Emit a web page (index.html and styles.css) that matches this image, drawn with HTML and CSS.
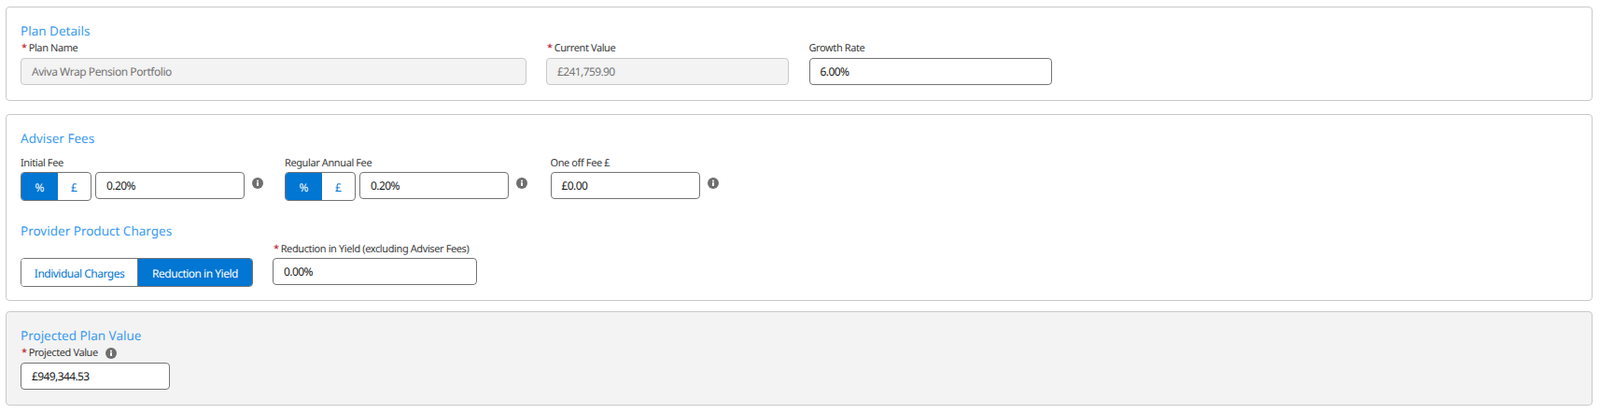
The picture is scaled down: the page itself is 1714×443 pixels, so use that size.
FILE: index.html
```html
<!DOCTYPE html>
<html lang="en">
<head>
<meta charset="utf-8">
<title>Plan</title>
<link rel="stylesheet" href="styles.css">
</head>
<body>
<section class="card card-plan">
  <h2 class="title">Plan Details</h2>
  <div class="row">
    <div class="field w-name">
      <label class="label tall"><span class="req">*</span>Plan Name</label>
      <div class="input disabled">Aviva Wrap Pension Portfolio</div>
    </div>
    <div class="field w-value">
      <label class="label tall"><span class="req">*</span>Current Value</label>
      <div class="input disabled num">£241,759.90</div>
    </div>
    <div class="field w-value">
      <label class="label tall">Growth Rate</label>
      <div class="input num">6.00%</div>
    </div>
  </div>
</section>

<section class="card card-fees">
  <h2 class="title">Adviser Fees</h2>
  <div class="fees">
    <div class="fee fee-1">
      <label class="label">Initial Fee</label>
      <div class="fee-line">
        <div class="toggle"><span class="seg on pct">%</span><span class="seg gbp">£</span></div>
        <div class="input num w-fee">0.20%</div>
        <svg class="info" viewBox="0 0 12 12"><circle cx="6" cy="6" r="6"/><rect x="5" y="5.2" width="2" height="3.8" fill="#fff"/><rect x="5" y="2.8" width="2" height="1.6" fill="#fff"/></svg>
      </div>
    </div>
    <div class="fee fee-2">
      <label class="label">Regular Annual Fee</label>
      <div class="fee-line">
        <div class="toggle"><span class="seg on pct">%</span><span class="seg gbp">£</span></div>
        <div class="input num w-fee">0.20%</div>
        <svg class="info" viewBox="0 0 12 12"><circle cx="6" cy="6" r="6"/><rect x="5" y="5.2" width="2" height="3.8" fill="#fff"/><rect x="5" y="2.8" width="2" height="1.6" fill="#fff"/></svg>
      </div>
    </div>
    <div class="fee">
      <label class="label">One off Fee £</label>
      <div class="fee-line">
        <div class="input num w-fee">£0.00</div>
        <svg class="info" viewBox="0 0 12 12"><circle cx="6" cy="6" r="6"/><rect x="5" y="5.2" width="2" height="3.8" fill="#fff"/><rect x="5" y="2.8" width="2" height="1.6" fill="#fff"/></svg>
      </div>
    </div>
  </div>
  <h2 class="title title-charges">Provider Product Charges</h2>
  <div class="charges">
    <div class="segmented"><span class="opt opt-a">Individual Charges</span><span class="opt opt-b">Reduction in Yield</span></div>
    <div class="field w-yield">
      <label class="label"><span class="req">*</span>Reduction in Yield (excluding Adviser Fees)</label>
      <div class="input num">0.00%</div>
    </div>
  </div>
</section>

<section class="card card-proj">
  <h2 class="title">Projected Plan Value</h2>
  <div class="field w-fee">
    <label class="label tall"><span class="req">*</span>Projected Value<svg class="info info-inline" viewBox="0 0 12 12"><circle cx="6" cy="6" r="6"/><rect x="5" y="5.2" width="2" height="3.8" fill="#fff"/><rect x="5" y="2.8" width="2" height="1.6" fill="#fff"/></svg></label>
    <div class="input num">£949,344.53</div>
  </div>
</section>
</body>
</html>
```
FILE: styles.css
```css
* { box-sizing: border-box; }
html, body { margin: 0; padding: 0; }
body {
  width: 1714px;
  height: 443px;
  padding: 7px 8px 0 6px;
  background: #fff;
  font-family: "Noto Sans", "Open Sans", sans-serif;
  font-size: 12px;
  color: #181818;
  overflow: hidden;
  text-rendering: geometricPrecision;
}
.card {
  border: 1px solid #c9c9c9;
  border-radius: 4px;
  padding: 16px 15px 0;
  background: #fff;
}
.card-plan { height: 101px; margin-bottom: 14px; }
.card-fees { height: 200px; margin-bottom: 11px; }
.card-proj { height: 101px; background: #f3f3f3; }
.title {
  margin: 0;
  font-size: 13.5px;
  line-height: 18px;
  font-weight: 400;
  color: #3a9bf0;
}
.row { display: flex; gap: 21.5px; }
.field { display: flex; flex-direction: column; }
.w-name { width: 541.5px; }
.w-value { width: 260px; }
.w-fee { width: 160px; }
.w-yield { width: 219px; margin-top: -18px; }
.label {
  display: flex;
  align-items: center;
  height: 18px;
  font-size: 11px;
  line-height: 18px;
  color: #3a3a3a;
  letter-spacing: -0.4px;
  white-space: nowrap;
}
.label.tall { height: 20px; }
.req { color: #ba0517; margin: 0 2px 0 1px; }
.input {
  height: 29px;
  line-height: 27px;
  padding: 0 11px;
  border: 1px solid #747474;
  border-radius: 4px;
  background: #fff;
  color: #181818;
  font-size: 12px;
  letter-spacing: -0.45px;
}
.input.num { letter-spacing: -0.6px; }
.input.disabled {
  border-color: #c9c9c9;
  background: #f3f3f3;
  color: #747474;
}
.fees { display: flex; margin-top: 9px; }
.fee { display: flex; flex-direction: column; }
.fee-1 { width: 283px; }
.fee-2 { width: 284.5px; }
.fee-line { display: flex; align-items: flex-start; }
.toggle {
  display: flex;
  width: 76px;
  height: 31px;
  margin-right: 4px;
  border: 1px solid #747474;
  border-radius: 4px;
  overflow: hidden;
  font-size: 12px;
  line-height: 31px;
  text-align: center;
}
.seg { color: #0176d3; }
.seg.pct { width: 39px; }
.seg.gbp { flex: 1; }
.seg.on { background: #0176d3; color: #fff; }
.info {
  width: 12px;
  height: 12px;
  margin: 6px 0 0 8px;
  fill: #6f6f6f;
  flex: none;
}
.title-charges { margin-top: 23px; }
.charges { display: flex; gap: 21px; margin-top: 20px; align-items: flex-start; }
.segmented {
  display: flex;
  width: 249px;
  height: 31px;
  border: 1px solid #747474;
  border-radius: 4px;
  overflow: hidden;
  font-size: 12px;
  letter-spacing: -0.5px;
  line-height: 31px;
  text-align: center;
}
.opt-a { width: 125px; color: #0176d3; background: #fff; border-right: 1px solid #747474; }
.opt-b { flex: 1; background: #0176d3; color: #fff; }
.info-inline { margin: 0 0 0 8px; }
```
